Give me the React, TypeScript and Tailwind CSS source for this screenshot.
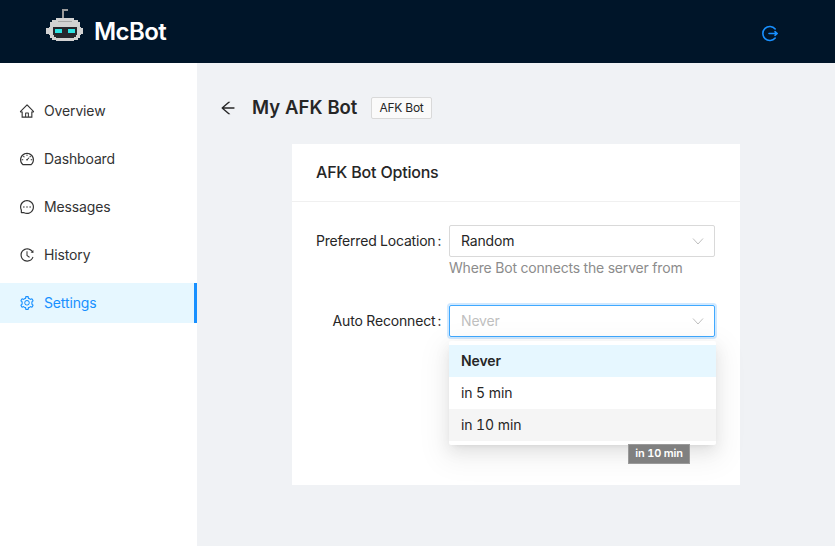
import React from "react";
import { AiOutlineHome, AiOutlineDashboard, AiOutlineMessage, AiOutlineHistory, AiOutlineSetting, AiOutlineArrowLeft } from "react-icons/ai";

function Robot() {
  return (
    <svg width="37" height="45" viewBox="0 0 37 45" shapeRendering="crispEdges" className="shrink-0">
      <path d="M16 0h6v2h-4v7h-2z" fill="#9a9a9a" />
      <path d="M10 9h18v2h4v2h2v5h1v1h2v6h-2v1h-1v3h-2v2h-4v1H10v-1H6v-2H4v-3H3v-1H0v-6h3v-1h1v-5h2v-2h4z" fill="#d2d2d2" />
      <path d="M12 12h14v1H12z" fill="#a6a6a6" />
      <path d="M7 18h24v8h-1v2h-2v1H10v-1H8v-2H7z" fill="#26272d" />
      <path d="M9 20h7v4H9zM22 20h7v4h-7z" fill="#2fe3e3" />
    </svg>
  );
}

const Nav = ({ icon, label, active }: { icon: React.ReactNode; label: string; active?: boolean }) => (
  <div className={`h-10 flex items-center pl-[19px] gap-[9px] text-sm tracking-[-0.14px] ${active ? "bg-[#e6f7ff] text-[#1890ff] border-r-[3px] border-[#1890ff]" : "text-[#333333]"}`}>
    {icon}
    <span>{label}</span>
  </div>
);

const Chevron = () => (
  <svg width="12" height="12" viewBox="0 0 12 12" fill="none" stroke="#bfbfbf" strokeWidth="1">
    <path d="M1 3.5 6 9l5-5.500" />
  </svg>
);

export default function App() {
  return (
    <div className="font-['Inter',sans-serif] tabular-nums w-[835px] h-[546px] overflow-hidden flex flex-col bg-[#f0f2f5] text-[#262626]">
      <header className="h-[63px] shrink-0 bg-[#001529] flex items-center justify-between pl-[46px] pr-[57px]">
        <div className="flex items-center gap-[11px]">
          <Robot />
          <span className="text-white text-2xl font-semibold leading-none tracking-[-0.6px]">McBot</span>
        </div>
        <svg width="17" height="17" viewBox="0 0 17 17" fill="none" stroke="#1890ff" strokeWidth="1.6" strokeLinecap="round" className="mt-[4px]">
          <path d="M14.200 4A7 7 0 1 0 14.200 13" />
          <path d="M8 8.500h8M14 6.700l2 1.800-2 1.800" />
        </svg>
      </header>
      <div className="flex flex-1 min-h-0">
        <aside className="w-[197px] shrink-0 bg-white pt-7 flex flex-col gap-2">
          <Nav label="Overview" icon={<AiOutlineHome size={16} />} />
          <Nav label="Dashboard" icon={<AiOutlineDashboard size={16} />} />
          <Nav label="Messages" icon={<AiOutlineMessage size={16} />} />
          <Nav label="History" icon={<AiOutlineHistory size={16} />} />
          <Nav active label="Settings" icon={<AiOutlineSetting size={16} />} />
        </aside>
        <main className="flex-1 min-w-0 pt-[27px]">
          <div className="flex items-center h-9 pl-[22px] mb-[18px]">
            <AiOutlineArrowLeft size={18} className="mr-[15px] text-[#262626]" />
            <h1 className="text-[18.5px] font-semibold mr-[14px]">My AFK Bot</h1>
            <span className="h-[22px] flex items-center px-[7px] text-xs border border-[#d9d9d9] rounded-[2px] bg-[#fafafa] tracking-[-0.2px]">AFK Bot</span>
          </div>
          <section className="ml-[95px] w-[448px] h-[341px] bg-white">
            <div className="h-[58px] flex items-center px-6 pb-px border-b border-[#f0f0f0] font-medium tracking-[-0.2px]">AFK Bot Options</div>
            <div className="pt-[23px]">
              <div className="flex">
                <div className="w-[157px] h-8 flex items-center justify-end text-sm tracking-[-0.2px]">Preferred Location<span className="ml-[2px] mr-2">:</span></div>
                <div className="w-[266px]">
                  <div className="h-8 border border-[#d9d9d9] rounded-[2px] flex items-center justify-between pl-[11px] pr-[10px] text-sm tracking-[-0.17px]"><span>Random</span><Chevron /></div>
                  <div className="text-sm text-[#8c8c8c] h-[22px] leading-[22px] tracking-[-0.17px]">Where Bot connects the server from</div>
                </div>
              </div>
              <div className="flex mt-[26px]">
                <div className="w-[157px] h-8 flex items-center justify-end text-sm tracking-[-0.17px]">Auto Reconnect<span className="ml-[2px] mr-2">:</span></div>
                <div className="w-[266px] relative">
                  <div className="h-8 border border-[#40a9ff] rounded-[2px] shadow-[0_0_0_2px_rgba(24,144,255,0.2)] flex items-center justify-between pl-[11px] pr-[10px] text-sm text-[#bfbfbf] tracking-[-0.17px]"><span>Never</span><Chevron /></div>
                  <div className="absolute left-0 top-[36px] w-[267px] bg-white rounded-[2px] py-1 text-sm tracking-[-0.1px] shadow-[0_3px_6px_-4px_rgba(0,0,0,0.12),0_6px_16px_0_rgba(0,0,0,0.08),0_9px_28px_8px_rgba(0,0,0,0.05)]">
                    <div className="h-8 flex items-center px-3 bg-[#e6f7ff] font-semibold">Never</div>
                    <div className="h-8 flex items-center px-3">in 5 min</div>
                    <div className="h-8 flex items-center px-3 bg-[#f5f5f5]">in 10 min</div>
                    <div className="absolute left-[179px] top-[103px] w-[62px] h-[20px] flex items-center justify-center bg-[#808080] border border-[#9a9a9a] text-white text-[11px] font-semibold tracking-[-0.2px]">in 10 min</div>
                  </div>
                </div>
              </div>
            </div>
          </section>
        </main>
      </div>
    </div>
  );
}
